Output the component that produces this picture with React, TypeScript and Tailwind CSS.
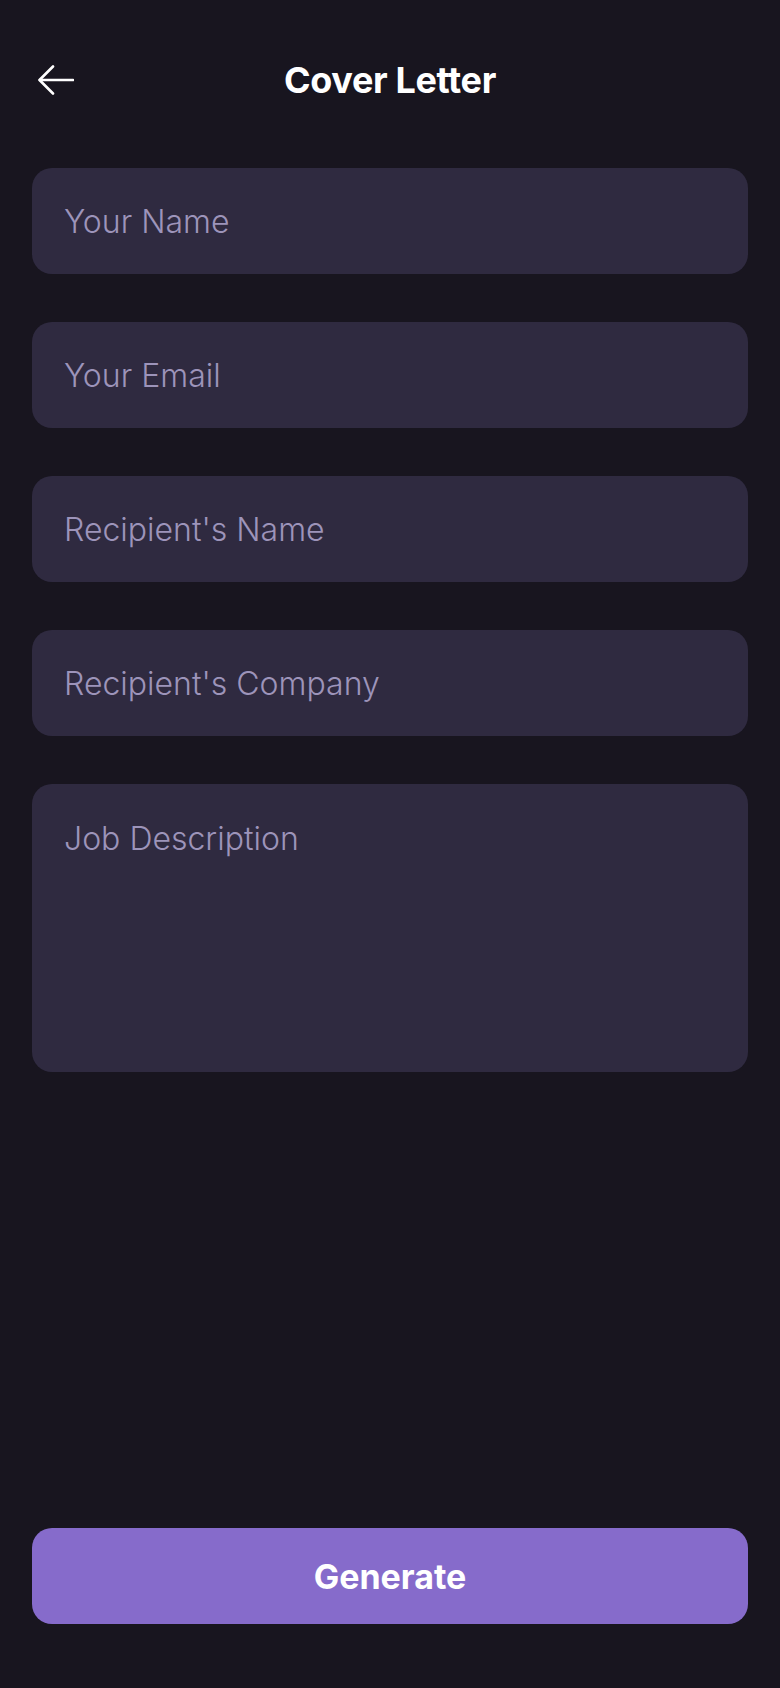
import React from "react";

const fields = ["Your Name", "Your Email", "Recipient's Name", "Recipient's Company"];

function BackArrow() {
  return (
    <svg width="36" height="30" viewBox="0 0 36 30" fill="none" stroke="white" strokeWidth="2.6" strokeLinecap="round" strokeLinejoin="round">
      <path d="M35 15H2" />
      <path d="M15 1.5 1.5 15 15 28.5" />
    </svg>
  );
}

export default function App() {
  return (
    <div
      className="min-h-screen bg-[#18151f] flex flex-col px-8"
      style={{ fontFamily: "Inter, 'Open Sans', sans-serif" }}
    >
      {/* Header */}
      <header className="mt-12 h-16 grid grid-cols-[1fr_auto_1fr] items-center">
        <button className="justify-self-start pl-[6px]">
          <BackArrow />
        </button>
        <h1 className="text-[36px] font-bold text-white tracking-[-0.01em]">Cover Letter</h1>
        <div />
      </header>

      {/* Form */}
      <div className="mt-14 flex flex-col gap-12">
        {fields.map((f) => (
          <input
            key={f}
            type="text"
            placeholder={f}
            className="h-[106px] w-full rounded-[20px] bg-[#2f2a40] px-8 text-[32px] font-light text-white placeholder:text-[#9d94ba] outline-none"
          />
        ))}
        <textarea
          placeholder="Job Description"
          className="h-[288px] w-full resize-none rounded-[20px] bg-[#2f2a40] px-8 pt-[35px] text-[32px] leading-[40px] font-light text-white placeholder:text-[#9d94ba] outline-none"
        />
      </div>

      <div className="flex-1" />

      <button className="mb-16 h-24 w-full rounded-[20px] bg-[#866bcb] text-[34px] font-bold text-white">
        Generate
      </button>
    </div>
  );
}
